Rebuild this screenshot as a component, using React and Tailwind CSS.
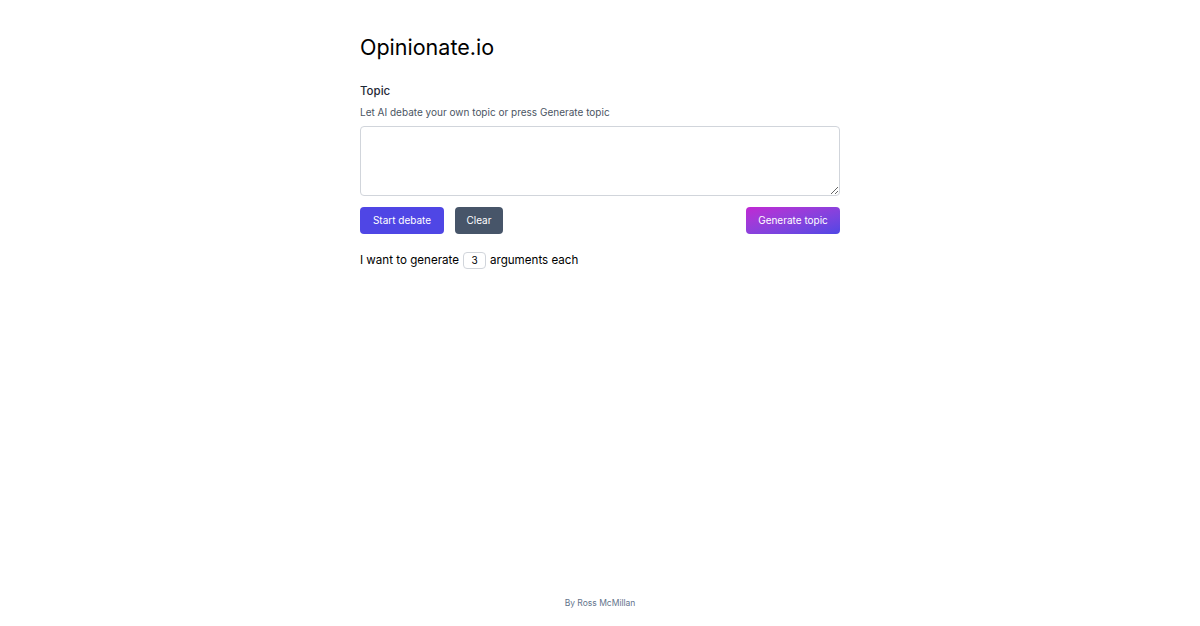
import React, { useState } from "react";

const App = () => {
  const [topic, setTopic] = useState("");
  const [count, setCount] = useState(3);

  return (
    <div
      className="min-h-screen flex flex-col bg-white text-black"
      style={{ fontFamily: "Inter, 'Noto Sans', sans-serif" }}
    >
      <main className="w-[480px] mx-auto pt-[33px] flex-grow">
        <h1 className="text-[21.5px] leading-[28px] text-black">Opinionate.io</h1>

        <div className="mt-[22px]">
          <label className="block text-[11.5px] font-medium leading-4 text-[#1f2937]">
            Topic
          </label>
          <p className="mt-[6px] text-[10px] leading-[14px] text-[#4b5563]">
            Let AI debate your own topic or press Generate topic
          </p>
          <textarea
            value={topic}
            onChange={(e) => setTopic(e.target.value)}
            className="mt-[7px] block w-full h-[70px] border border-[#d1d5db] rounded-[4px] px-2 py-1 text-sm focus:outline-none"
          />
        </div>

        <div className="mt-[11px] flex items-center">
          <button className="h-[27px] w-[84px] bg-[#4f46e5] text-white text-[10px] rounded-[4px] whitespace-nowrap">
            Start debate
          </button>
          <button className="ml-[11px] h-[27px] w-[48px] bg-[#475569] text-white text-[10px] rounded-[4px]">
            Clear
          </button>
          <button className="ml-auto h-[27px] w-[94px] bg-gradient-to-br from-[#c026d3] to-[#4f46e5] text-white text-[10px] rounded-[4px] whitespace-nowrap">
            Generate topic
          </button>
        </div>

        <div className="mt-[17px] flex items-center text-[11.6px] leading-[18px] text-black">
          <span>I want to generate</span>
          <input
            type="text"
            value={count}
            onChange={(e) => setCount(e.target.value)}
            className="mx-1 w-[23px] h-[17px] border border-[#d1d5db] rounded-[4px] text-center text-[10px] focus:outline-none"
          />
          <span>arguments each</span>
        </div>
      </main>

      <footer className="pb-[17px] text-center text-[8.5px] leading-3 text-[#64748b]">
        By Ross McMillan
      </footer>
    </div>
  );
};

export default App;
